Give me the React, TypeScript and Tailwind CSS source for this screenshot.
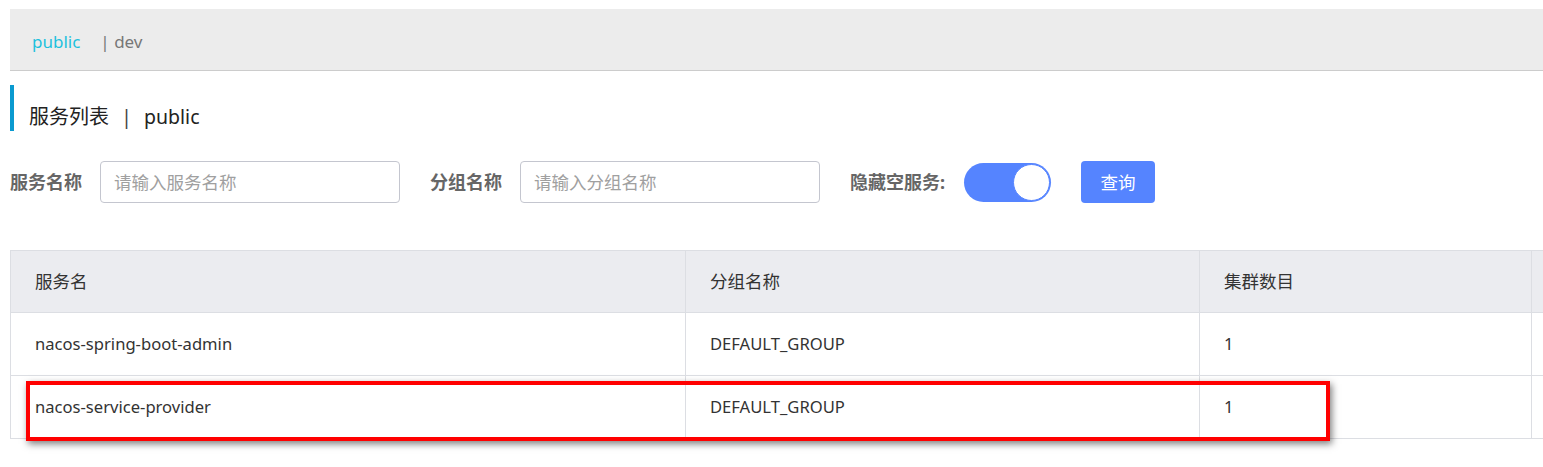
import React from 'react'

const cjk = '"Noto Sans", "Noto Sans CJK SC", sans-serif'

const rows = [
  { name: 'nacos-spring-boot-admin', group: 'DEFAULT_GROUP', clusters: '1' },
  { name: 'nacos-service-provider', group: 'DEFAULT_GROUP', clusters: '1' },
]

export default function App() {
  return (
    <div className="w-[1543px] h-[467px] overflow-hidden bg-white pl-[10px] pt-[9px] text-[#333]" style={{ fontFamily: cjk }}>
      {/* namespace bar */}
      <div className="h-[62px] w-[1560px] bg-[#ececec] border-b border-[#cccccc] flex items-center pl-[22px] pt-[5px] text-[17px]">
        <span className="text-[#1ec1dd]">public</span>
        <span className="ml-[20px] text-[#777]">| dev</span>
      </div>

      {/* title */}
      <div className="mt-[14px] h-[46px] border-l-4 border-[#0a9ad0] flex items-center pl-[15px] pt-[17px] text-[20px] text-[#222]">
        <span>服务列表</span>
        <span className="mx-[12px] text-[#444]">|</span>
        <span className="text-[19.5px]">public</span>
      </div>

      {/* filters */}
      <div className="mt-[30px] flex items-center h-[42px] text-[17.5px]">
        <span className="font-bold text-[#666] text-[18px]">服务名称</span>
        <div className="ml-[18px] w-[300px] h-[42px] border border-[#c4c6cf] rounded-[4px] flex items-center pl-[13px] text-[#a0a0a0]">
          请输入服务名称
        </div>
        <span className="ml-[30px] font-bold text-[#666] text-[18px]">分组名称</span>
        <div className="ml-[18px] w-[300px] h-[42px] border border-[#c4c6cf] rounded-[4px] flex items-center pl-[13px] text-[#a0a0a0]">
          请输入分组名称
        </div>
        <span className="ml-[30px] font-bold text-[#666] text-[18px]">隐藏空服务:</span>
        <div className="ml-[19px] w-[87px] h-[39px] rounded-full bg-[#5584ff] flex items-center justify-end pr-[1px]">
          <div className="w-[37px] h-[37px] rounded-full bg-white border border-[#5584ff]" />
        </div>
        <button className="ml-[30px] w-[74px] h-[42px] rounded-[4px] bg-[#5584ff] text-white text-[17.5px]">查询</button>
      </div>

      {/* table */}
      <div className="relative mt-[47px] w-[1560px] text-[17.5px]">
        <div className="flex h-[63px] bg-[#ebecf0] border-y border-[#dcdee3]">
          <div className="w-[675px] border-l border-[#dcdee3] flex items-center pl-[24px]">服务名</div>
          <div className="w-[514px] border-l border-[#dcdee3] flex items-center pl-[24px]">分组名称</div>
          <div className="w-[332px] border-l border-[#dcdee3] flex items-center pl-[24px]">集群数目</div>
          <div className="flex-1 border-l border-[#dcdee3]" />
        </div>
        {rows.map((r) => (
          <div key={r.name} className="flex h-[63px] border-b border-[#dcdee3] text-[16.6px]">
            <div className="w-[675px] border-l border-[#dcdee3] flex items-center pl-[24px]">{r.name}</div>
            <div className="w-[514px] border-l border-[#dcdee3] flex items-center pl-[24px]">{r.group}</div>
            <div className="w-[332px] border-l border-[#dcdee3] flex items-center pl-[24px]">{r.clusters}</div>
            <div className="flex-1 border-l border-[#dcdee3]" />
          </div>
        ))}

        {/* highlight box */}
        <div className="absolute left-[16px] top-[131px] w-[1304px] h-[60px] border-[4px] border-[#ff0000] shadow-[2px_3px_7px_rgba(0,0,0,0.5)]" />
      </div>
    </div>
  )
}
